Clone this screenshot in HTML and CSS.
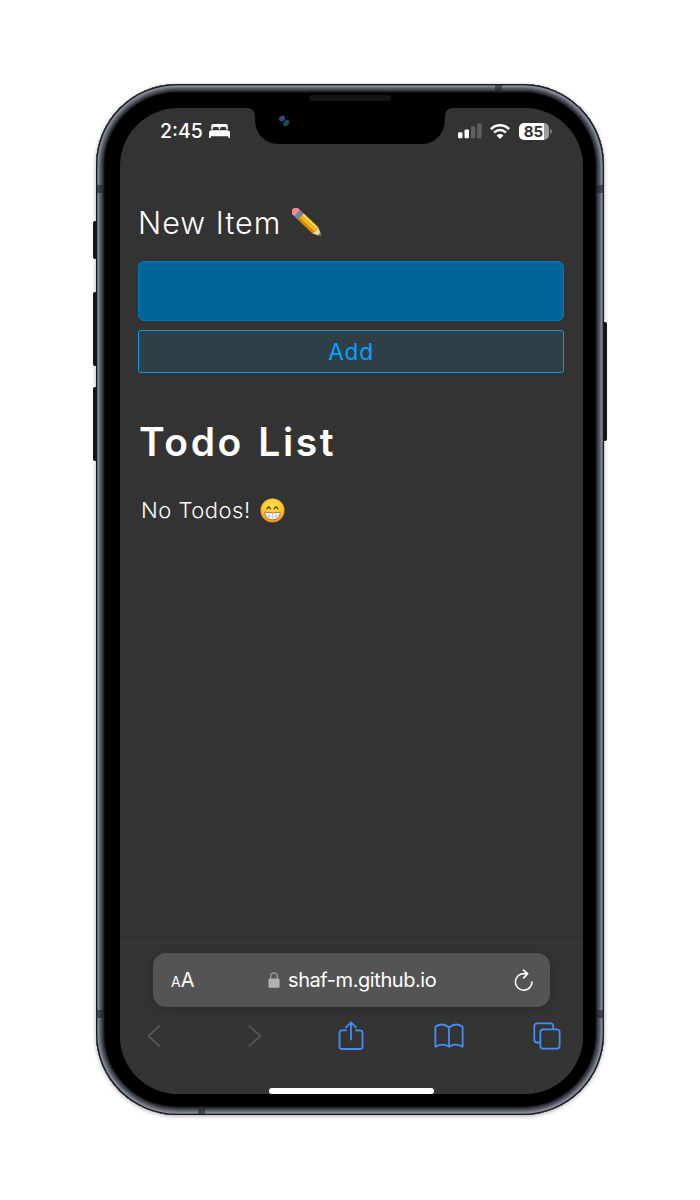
FILE: index.html
```
<!DOCTYPE html>
<html lang="en">
<head>
<meta charset="utf-8">
<title>Todo List</title>
<link rel="stylesheet" href="styles.css">
</head>
<body>
<div class="phone">
  <i class="key mute"></i><i class="key up"></i><i class="key down"></i><i class="key power"></i>
  <i class="band h top"></i><i class="band h bottom"></i>
  <i class="band v lt"></i><i class="band v rt"></i><i class="band v lb"></i><i class="band v rb"></i>
  <div class="bezel"></div>
  <i class="speaker"></i>
  <div class="screen">
    <svg class="notch" width="206" height="37" viewBox="0 0 206 37">
      <path d="M0 0C6 0 8 4 8 10C8 25 17 36 32 36H174C189 36 198 25 198 10C198 4 200 0 206 0Z" fill="#000"/>
      <circle cx="37" cy="13" r="6" fill="#07090d"/>
      <ellipse cx="35" cy="10.500" rx="3.200" ry="2.600" transform="rotate(-35 35 10.500)" fill="#3e477d"/>
      <ellipse cx="39.300" cy="15" rx="3.400" ry="2.500" transform="rotate(-45 39.300 15)" fill="#214c5c"/>
    </svg>
    <header class="status">
      <span class="time">2:45</span>
      <svg class="bed" width="21" height="14" viewBox="0 0 21 14" fill="#fff">
        <path d="M2.2 5.600V2Q2.200 0 4.200 0H16.800Q18.800 0 18.800 2V5.600H17.200V4.400Q17.200 3 15.800 3H12.600Q11.200 3 11.200 4.400V5.600H9.800V4.400Q9.800 3 8.400 3H5.200Q3.800 3 3.800 4.400V5.600Z"/>
        <path d="M2.600 6.200H18.400Q21 6.200 21 8.800V14H19.300V12.200H1.700V14H0V8.800Q0 6.200 2.600 6.200Z"/>
      </svg>
      <svg class="signal" width="24" height="16" viewBox="0 0 24 16">
        <rect x="0" y="9.300" width="4.500" height="6" rx="1.200" fill="#fff"/>
        <rect x="6.500" y="6.500" width="4.500" height="8.800" rx="1.200" fill="#fff"/>
        <rect x="12.800" y="3.200" width="4.500" height="12.100" rx="1.200" fill="#5f5f5f"/>
        <rect x="19.200" y="0.300" width="4.500" height="15" rx="1.200" fill="#5f5f5f"/>
      </svg>
      <svg class="wifi" width="20" height="15" viewBox="0 0 20 15" fill="none" stroke="#fff" stroke-width="2.500">
        <path d="M.9 5.100Q5 1.300 10 1.300T19.100 5.100M4.100 8.500Q6.800 6 10 6T15.900 8.500"/>
        <path d="M10 15L6.600 11.500Q10 8.700 13.400 11.500Z" fill="#fff" stroke="none"/>
      </svg>
      <span class="battery">85</span>
    </header>
    <main class="app">
      <label class="label"><span class="caption">New Item</span>
        <svg class="pencil" width="30" height="29" viewBox="0 0 30 29">
          <g transform="translate(3.800 3.800) rotate(43.500)">
            <path d="M-1 -4.200Q-4.200 -3.600 -4.200 0T-1 4.200H2V-4.200Z" fill="#ee8d8f"/>
            <path d="M1.500 -4.300H7V4.300H1.500Z" fill="#8193a7"/>
            <path d="M3.200 -4.300V4.300M5.300 -4.300V4.300" stroke="#596c80" stroke-width=".8"/>
            <path d="M7 -4.300H27V-1.500H7Z" fill="#ffd84a"/>
            <path d="M7 -1.700H27.500V1.900H7Z" fill="#f8b914"/>
            <path d="M7 1.700H27V4.300H7Z" fill="#d68b08"/>
            <path d="M26.500 -4.300L34 -1.200Q35.300 0 34 1L26.500 4.300Q28.500 0 26.500 -4.300Z" fill="#f3d39a"/>
            <path d="M32.300 -1.800L34 -1.100Q35.400 0 34 1L32.300 1.800Z" fill="#69543f"/>
          </g>
        </svg>
      </label>
      <input class="field" type="text" aria-label="New Item">
      <button class="add" type="button">Add</button>
      <h1 class="title">Todo List</h1>
      <p class="empty"><span class="message">No Todos!</span>
        <svg class="grin" width="25" height="25" viewBox="0 0 25 25">
          <defs><radialGradient id="face" cx=".5" cy=".35" r=".65"><stop offset="0" stop-color="#ffe64f"/><stop offset=".65" stop-color="#ffc329"/><stop offset="1" stop-color="#ee8616"/></radialGradient></defs>
          <circle cx="12.500" cy="12.500" r="12" fill="url(#face)"/>
          <path d="M7 10.800Q8.700 6.600 10.400 10.800M14.200 10.800Q15.900 6.600 17.600 10.800" fill="none" stroke="#6b3d08" stroke-width="1.500" stroke-linecap="round"/>
          <path d="M4.800 14.200Q12.500 15.600 20.200 14.200Q19.700 21.700 12.500 21.700T4.800 14.200Z" fill="#fff" stroke="#8d6849" stroke-width=".8"/>
          <path d="M5.600 17.800Q12.500 19 19.400 17.800M9 15V21M12.500 15V21.500M16 15V21" fill="none" stroke="#a9a29b" stroke-width=".6"/>
        </svg>
      </p>
    </main>
    <footer class="browser">
      <div class="address">
        <span class="aa"><small>A</small>A</span>
        <span class="url">
          <svg width="12" height="16" viewBox="0 0 12 16"><path d="M2.700 7V4.200Q2.700 1 6 1T9.300 4.200V7" fill="none" stroke="#96969a" stroke-width="1.400"/><rect x=".4" y="6.400" width="11.200" height="9.400" rx="1.600" fill="#b0b0b6"/></svg>
          <span class="host">shaf-m.github.io</span>
        </span>
        <svg class="reload" width="20" height="23" viewBox="0 0 20 23" fill="none" stroke="#fff" stroke-width="1.600" stroke-linecap="round" stroke-linejoin="round"><path d="M18 13A8.300 8.300 0 1 1 9.700 4.600H13.500M9.500 1L13.600 4.700L9.700 8.900"/></svg>
      </div>
      <nav class="tools">
        <svg width="14" height="24" viewBox="0 0 14 24" class="off"><path d="M12.400 2L1.400 12L12.400 22"/></svg>
        <svg width="14" height="24" viewBox="0 0 14 24" class="off forward"><path d="M1.400 2L12.400 12L1.400 22"/></svg>
        <svg width="26" height="30" viewBox="0 0 26 30" class="share"><path d="M8.200 9.300H4Q1.500 9.300 1.500 11.800V25.500Q1.500 28 4 28H22Q24.500 28 24.500 25.500V11.800Q24.500 9.300 22 9.300H17.800M13 18.500V1.500M8 6.300L13 1.300L18 6.300"/></svg>
        <svg width="30" height="26" viewBox="0 0 30 26"><path d="M15 4.500Q8.500 -1 1.400 3.700V23.800Q9 19.500 15 23.800Q21 19.500 28.600 23.800V3.700Q21.500 -1 15 4.500V23.800"/></svg>
        <svg width="28" height="28" viewBox="0 0 28 28"><path d="M7 20.500H4Q1.300 20.500 1.300 17.800V4Q1.300 1.300 4 1.300H17.500Q20.200 1.300 20.200 4V7"/><rect x="7.300" y="7.300" width="19.300" height="19.300" rx="2.800"/></svg>
      </nav>
      <div class="home"></div>
    </footer>
  </div>
</div>
</body>
</html>
```
FILE: styles.css
```
* { box-sizing: border-box; }
body { margin: 0; width: 700px; height: 1200px; padding: 84px 0 0 96px; background: #fff; font-family: Inter, "Liberation Sans", sans-serif; color: #fff; overflow: hidden; }
svg { display: block; flex: none; }

.phone { position: relative; width: 508px; height: 1031px; padding: 24px 21px 21px 24px; border-radius: 81px; background: #000; box-shadow: 0 1px 4px rgba(0,0,0,.35); }
.bezel { position: absolute; inset: 0; border-radius: 81px; box-shadow: inset 0 0 0 1.3px #14181c, inset 0 0 0 2.5px #858a96, inset 0 0 0 3.5px #777d88, inset 0 0 0 4.5px #606771, inset 0 0 0 5.5px #4c535c, inset 0 0 0 6.5px #3c444b, inset 0 0 0 7.5px #2b3238, inset 0 0 0 8.5px #14181b; }
.key { position: absolute; left: -3px; width: 4px; background: #10161a; border-radius: 2px 0 0 2px; }
.mute { top: 137px; height: 38px; }
.up { top: 208px; height: 74px; }
.down { top: 303px; height: 74px; }
.power { left: auto; right: -3px; top: 238px; height: 119px; border-radius: 0 2px 2px 0; }
.band { position: absolute; z-index: 1; background: rgba(30,35,40,.6); }
.h { width: 7px; height: 8px; }
.v { width: 8px; height: 8px; }
.top { left: 399px; top: 1px; }
.bottom { left: 102px; bottom: 1px; }
.lt, .lb { left: 0; }
.rt, .rb { right: 0; }
.lt, .rt { top: 101px; }
.lb, .rb { bottom: 97px; }
.speaker { position: absolute; left: 213px; top: 11px; width: 82px; height: 6px; border-radius: 3px; background: #151515; }

.screen { position: relative; width: 463px; height: 986px; border-radius: 58px; background: #333; overflow: hidden; display: flex; flex-direction: column; }
.notch { position: absolute; left: 127px; top: 0; }

.status { display: flex; align-items: center; height: 46px; padding: 0 34px 0 40px; }
.time { font-size: 19.5px; font-weight: 550; width: 49px; }
.signal { margin-left: auto; }
.wifi { margin: 0 9px 0 8px; }
.battery { position: relative; width: 30px; height: 17px; padding-right: 1px; border-radius: 5px; background: linear-gradient(90deg, #fff 84%, #9c9c9c 84%); color: #333; font-size: 15px; font-weight: 700; line-height: 17px; text-align: center; }
.battery::after { content: ""; position: absolute; right: -2.5px; top: 6px; width: 2px; height: 5px; border-radius: 0 2px 2px 0; background: #777; }

.app { flex: 1; display: flex; flex-direction: column; padding: 48px 19px 0 18px; }
.label { display: flex; align-items: center; height: 40px; margin-bottom: 19px; font-size: 30.5px; font-weight: 350; letter-spacing: 1px; }
.caption { width: 154px; white-space: nowrap; }
.field { width: 426px; height: 60px; padding: 0 12px; border: 1.5px solid #007bb8; border-radius: 6px; background: #006699; color: #fff; font: inherit; font-size: 22px; }
.add { width: 426px; height: 43px; margin-top: 9px; padding: 0; border: 1.5px solid #0a9ae8; border-radius: 3px; background: #2f3f48; color: #00a5ff; font: 400 22.5px Inter, sans-serif; letter-spacing: .8px; }
.title { margin: 43px 0 0 1px; font-size: 39px; line-height: 52px; font-weight: 560; letter-spacing: 2.6px; word-spacing: 2px; white-space: nowrap; }
.empty { display: flex; align-items: center; height: 30px; margin: 27px 0 0 3px; font-size: 22px; font-weight: 350; letter-spacing: .5px; }
.message { width: 119px; white-space: nowrap; }

.browser { height: 152px; border-top: 1px solid #393939; background: #343434; padding-top: 10px; }
.address { display: flex; align-items: center; width: 397px; height: 54px; margin-left: 33px; padding: 0 16px 0 18px; border-radius: 13px; background: #545454; box-shadow: 0 2px 12px rgba(0,0,0,.2); }
.aa { font-size: 20px; width: 97px; white-space: nowrap; }
.aa small { font-size: 14px; }
.url { display: flex; align-items: center; gap: 8px; }
.host { font-size: 20px; letter-spacing: -.42px; }
.reload { margin-left: auto; }
.tools { display: flex; align-items: center; gap: 69.5px; height: 30px; margin: 14px 0 0 27px; fill: none; stroke: #438df5; stroke-width: 1.8; stroke-linecap: round; stroke-linejoin: round; }
.off { stroke: #555; }
.forward { margin-left: 17px; }
.share { margin-left: 7px; }
.home { width: 165px; height: 6px; margin: 37px 0 0 149px; border-radius: 3px; background: #fff; }
```
